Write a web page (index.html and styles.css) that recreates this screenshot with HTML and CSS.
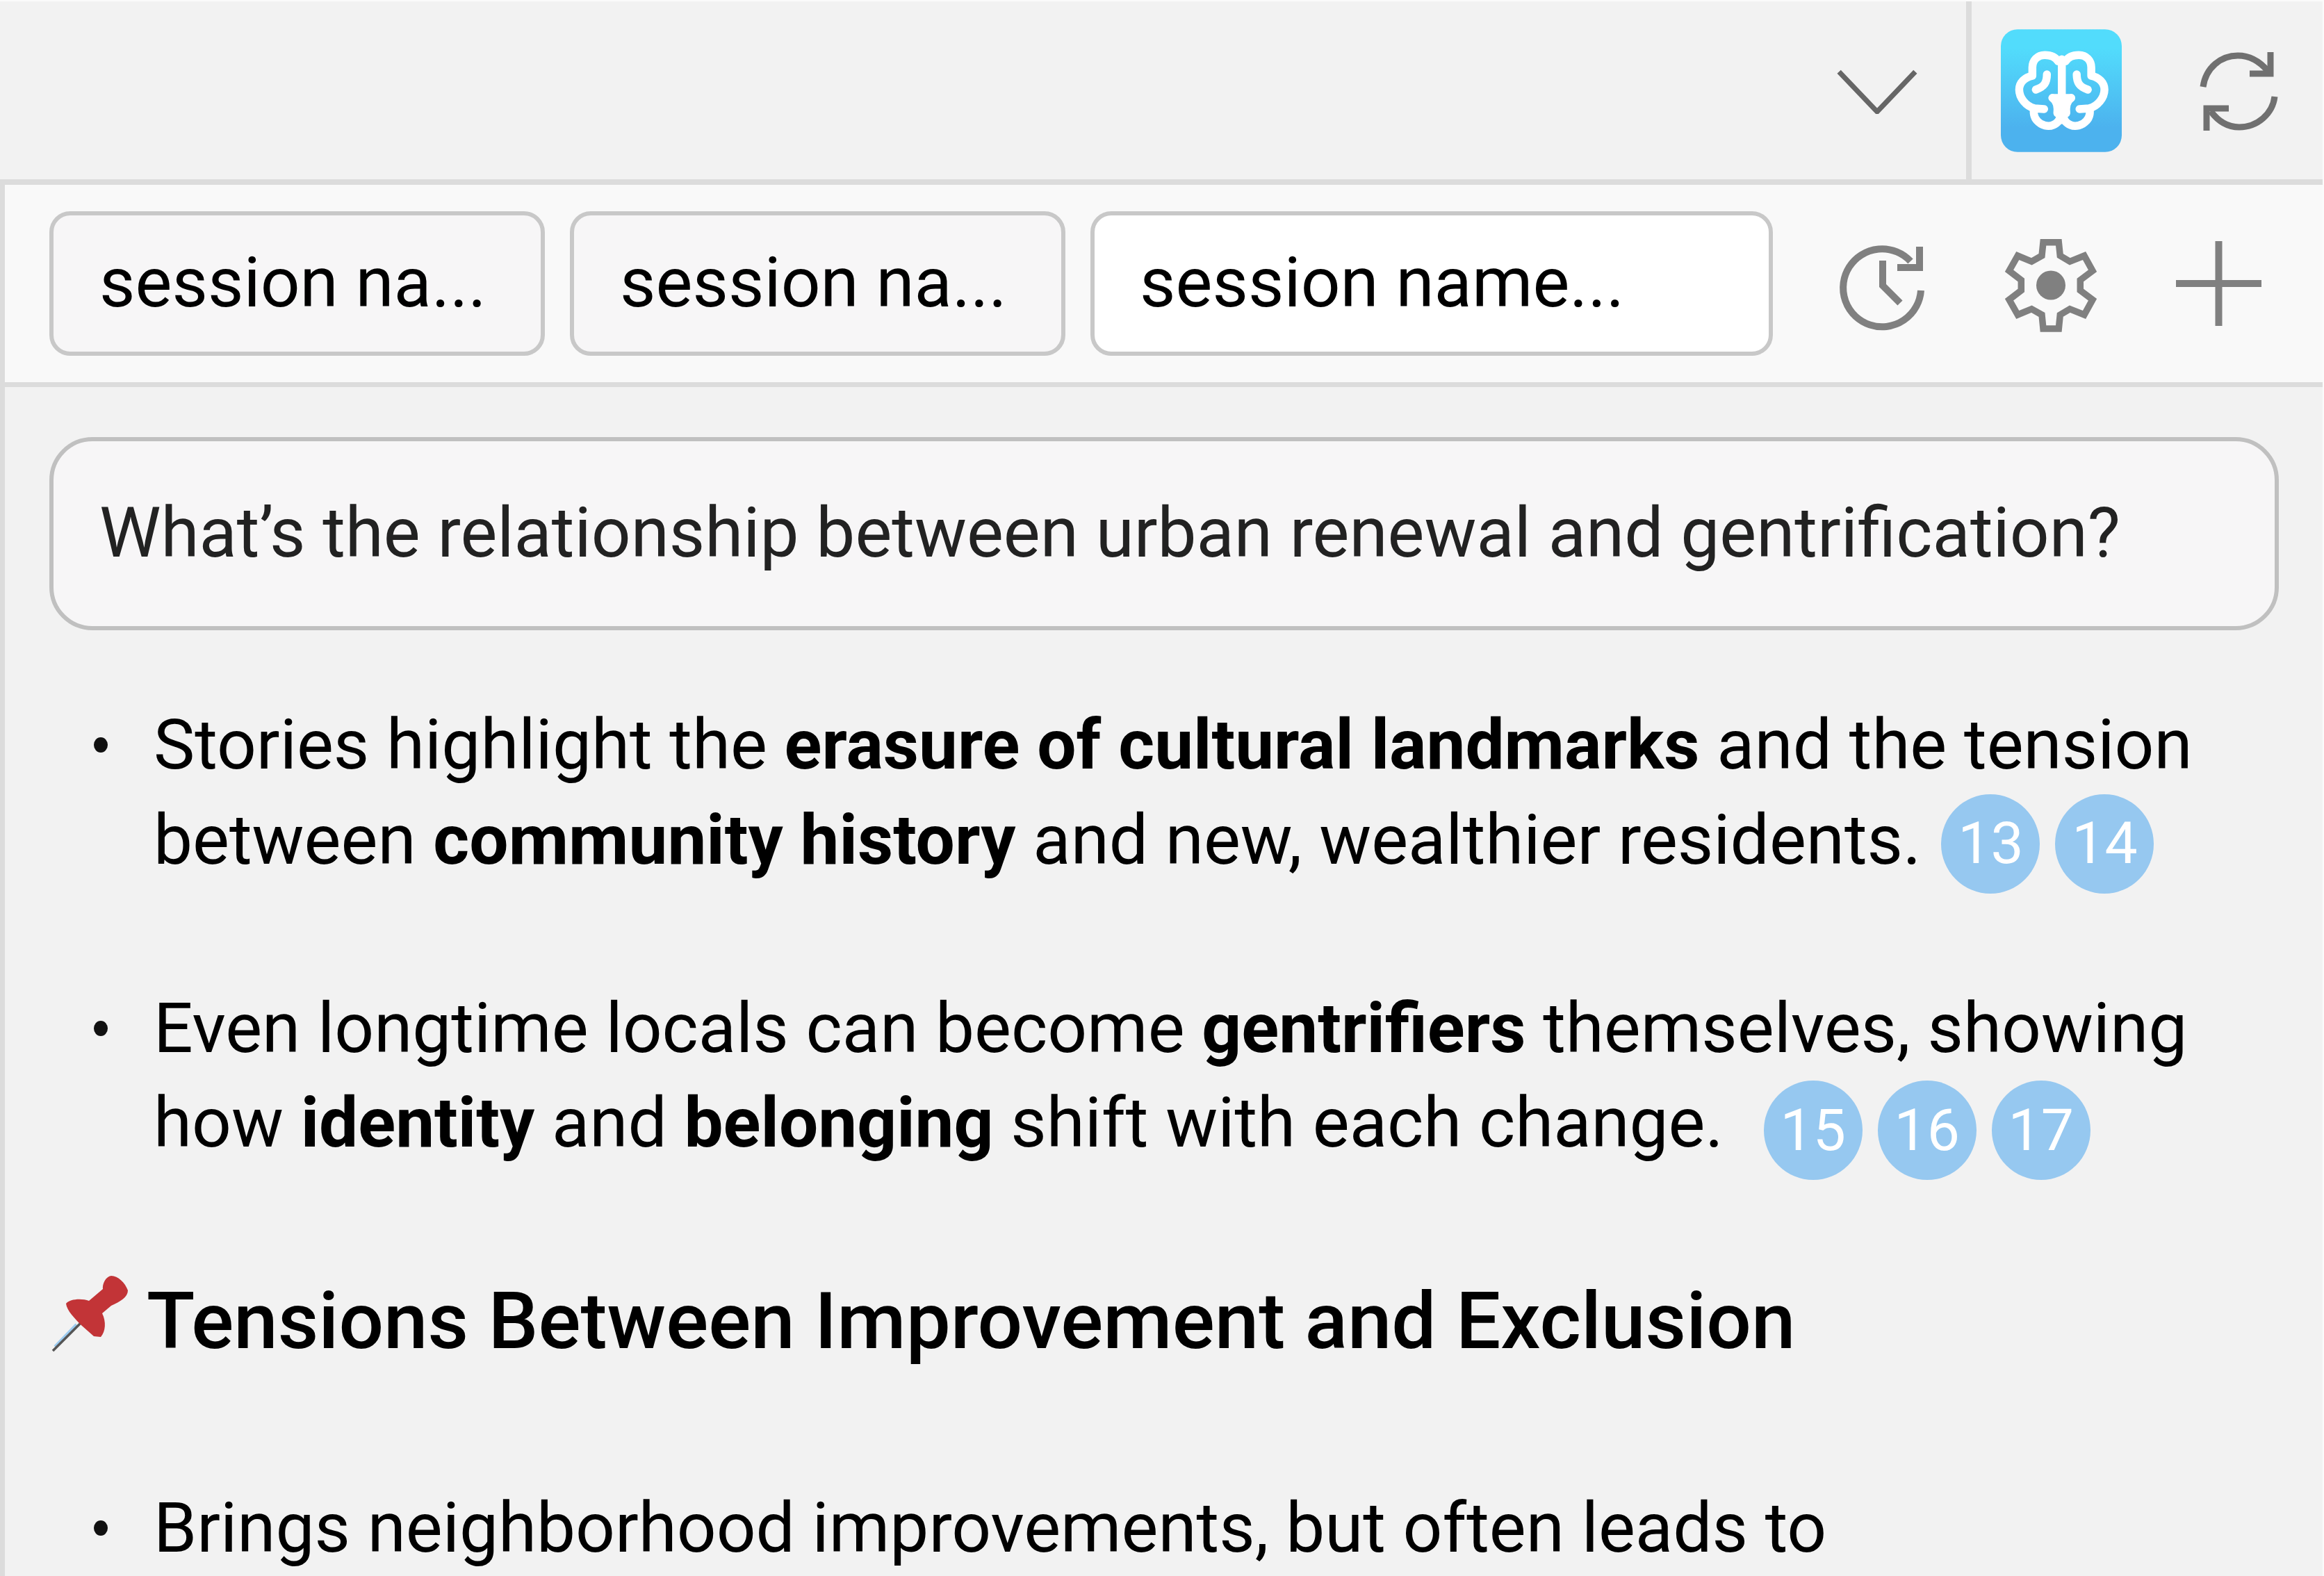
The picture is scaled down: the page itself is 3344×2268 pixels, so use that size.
FILE: index.html
```html
<!DOCTYPE html>
<html lang="en">
<head>
<meta charset="utf-8">
<title>Session</title>
<link rel="stylesheet" href="styles.css">
</head>
<body>
<div class="app">
  <header class="top-bar">
    <svg class="chevron" viewBox="0 0 111 61"><path d="M3 3 L55.500 58 L108 3"/></svg>
    <div class="divider"></div>
    <svg class="brain" viewBox="9.500 11 174.500 177">
      <defs>
        <linearGradient id="tile" x1="0" y1="0" x2="0" y2="1">
          <stop offset="0.15" stop-color="#52dcfc"/>
          <stop offset="0.8" stop-color="#4cb2ee"/>
        </linearGradient>
        <g id="lobe">
          <path d="M92 57 C88 50 80 48 73 48 C62 48 55 56 55 66 L55 78 C44 80 36 88 36 98 C36 110 46 122 58 125 L72 126 M58 125 C56 130 57 138 62 143 C68 150 78 152 85 149 C92 146 95 141 95 135 M76 76 C76 88 72 94 60 98 M84 110 C90 114 92 122 91 132"/>
        </g>
      </defs>
      <rect x="9.500" y="11" width="174.500" height="177" rx="24" fill="url(#tile)"/>
      <g class="brain-lines">
        <use href="#lobe"/>
        <use href="#lobe" transform="translate(195 0) scale(-1 1)"/>
        <path d="M97.500 54 V142 M84 110 H111"/>
      </g>
    </svg>
    <svg class="refresh" viewBox="0 0 150 150">
      <path d="M20 73 C24 45 46 28 70 28 C88 28 102 37 113 50"/>
      <path d="M117 23 V54 H87"/>
      <path d="M123 87 C120 112 98 131 72 131 C55 131 42 123 31 108"/>
      <path d="M25 136 V104 H57"/>
    </svg>
  </header>
  <main class="main">
    <nav class="tab-bar">
      <div class="tab">session na...</div>
      <div class="tab">session na...</div>
      <div class="tab tab-active">session name...</div>
      <svg class="tool tool-history" viewBox="0 0 150 150">
        <path d="M133 85 A56 56 0 1 1 118 43"/>
        <path d="M131 22 V52 H99"/>
        <path d="M78 42 V78 L103 103"/>
      </svg>
      <svg class="tool tool-gear" viewBox="0 0 150 150">
        <path d="M65 15.700 H87.300 L89.300 35 L103.300 43.300 L124 35 L136 56.700 L118.300 70 V85 L136 98.300 L124 120 L103.300 111.700 L89.300 120 L87.300 140 H65 L63 120 L48.300 111.700 L28.300 120 L16 98.300 L33.300 85 V70 L16 56.700 L28.300 35 L48.300 43.300 L63 35 Z"/>
        <circle class="gear-hub" cx="76" cy="77.500" r="21"/>
      </svg>
      <svg class="tool tool-plus" viewBox="0 0 123 122"><path d="M61.500 0 V122 M0 61 H123"/></svg>
    </nav>
    <section class="content">
      <div class="question">What’s the relationship between urban renewal and gentrification?</div>
      <ul class="points">
        <li>Stories highlight the <b>erasure of cultural landmarks</b> and the tension between <b>community history</b> and new, wealthier residents.<span class="badge badge-lead">13</span><span class="badge">14</span></li>
        <li>Even longtime locals can become <b>gentrifiers</b> themselves, showing how <b>identity</b> and <b>belonging</b> shift with each change.<span class="badge badge-low badge-lead-wide">15</span><span class="badge badge-low">16</span><span class="badge badge-low">17</span></li>
      </ul>
      <h2 class="section-title">
        <svg class="pin" viewBox="0 0 150 150">
          <path class="pin-shine" d="M19 118 L50 86"/>
          <path class="pin-needle" d="M16 124 L56 84"/>
          <path class="pin-head" d="M35 56 C40 49 58 48 68 52 L88 35 C87 28 92 17 100 16 C110 16 120 26 124 37 C124 47 113 53 100 59 L87 70 C93 82 92 96 85 104 L75 103 L58 88 C48 78 36 66 35 56 Z"/>
        </svg>
        <span>Tensions Between Improvement and Exclusion</span>
      </h2>
      <ul class="points">
        <li>Brings neighborhood improvements, but often leads to<br><span class="badge badge-next">18</span></li>
      </ul>
    </section>
  </main>
</div>
</body>
</html>
```
FILE: styles.css
```css
* { box-sizing: border-box; }
html, body { margin: 0; padding: 0; }
body { width: 3344px; height: 2268px; overflow: hidden; background: #f2f2f2; font-family: Roboto, "Liberation Sans", sans-serif; color: #000; }
.app { width: 3344px; height: 2268px; display: flex; flex-direction: column; overflow: hidden; border-right: 2px solid #fbfbfb; }
.top-bar { height: 266px; flex: none; display: flex; align-items: center; justify-content: flex-end; background: #f2f2f2; border-top: 2px solid #fbfbfb; border-bottom: 8px solid #dcdcdc; padding-right: 78px; }
.chevron { width: 116px; height: 64px; margin: 0 70px -4px 0; fill: none; stroke: #666; stroke-width: 7; }
.divider { width: 8px; align-self: stretch; background: #dcdcdc; }
.brain { width: 174px; height: 177px; margin: 0 113px 0 42px; }
.brain-lines { fill: none; stroke: #fff; stroke-width: 11.500; stroke-linecap: round; stroke-linejoin: round; }
.refresh { width: 150px; height: 150px; margin: -7px -36px 0 -16px; fill: none; stroke: #707070; stroke-width: 9; }
.main { flex: 1; min-height: 0; display: flex; flex-direction: column; border-left: 7px solid #dcdcdc; }
.tab-bar { height: 291px; flex: none; display: flex; align-items: center; gap: 36px; background: #f9f9f9; border-bottom: 7px solid #dcdcdc; padding-left: 64px; }
.tab { width: 713px; height: 208px; flex: none; display: flex; align-items: center; padding: 0 0 4px 66px; background: #f7f6f7; border: 6px solid #c8c8c8; border-radius: 30px; font-size: 99.800px; color: #000; }
.tab-active { width: 982px; padding-left: 65px; background: #fff; }
.tool { flex: none; fill: none; stroke: #808080; stroke-width: 10; }
.tool-history { width: 150px; height: 150px; margin-left: 44px; }
.tool-gear { width: 150px; height: 150px; margin-left: 58px; stroke-width: 9.500; }
.gear-hub { fill: #808080; stroke: none; }
.tool-plus { width: 123px; height: 122px; margin-left: 70px; }
.content { flex: 1; min-height: 0; padding: 72px 63px 0 64px; }
.question { height: 278px; display: flex; align-items: center; padding: 0 0 3px 66px; background: #f7f6f7; border: 6px solid #c0c0c0; border-radius: 62px; font-size: 99.800px; color: #222; }
.points { list-style: none; margin: 0; padding: 0; font-size: 99.800px; line-height: 136.500px; }
.points li { position: relative; padding-left: 150px; }
.points li::before { content: ""; position: absolute; left: 64px; top: 57px; width: 20px; height: 22px; border-radius: 50%; background: #111; }
.content > .points:nth-of-type(1) { margin-top: 97px; }
.points li + li { margin-top: 134px; }
.badge { display: inline-flex; align-items: center; justify-content: center; width: 142px; height: 143px; margin: -12px 0 -8px 22px; vertical-align: middle; border-radius: 50%; background: #96c8f0; color: #fff; font-size: 84px; font-weight: 400; line-height: 1; }
.badge-lead { margin-left: 29px; }
.badge-lead-wide { margin-left: 58px; }
.badge-low { margin-top: -7px; margin-bottom: -13px; }
.badge-next { margin-left: 2466px; }
.section-title { display: flex; align-items: center; height: 136px; margin: 148px 0 0 -11px; font-size: 114px; font-weight: 500; color: #000; }
.pin { width: 150px; height: 150px; margin: -12px 1px 0 0; flex: none; }
.pin-head { fill: #c23437; }
.pin-needle { fill: none; stroke: #555; stroke-width: 3.500; }
.pin-shine { fill: none; stroke: #9ccbf0; stroke-width: 4; }
.section-title + .points { margin-top: 162px; }
```
